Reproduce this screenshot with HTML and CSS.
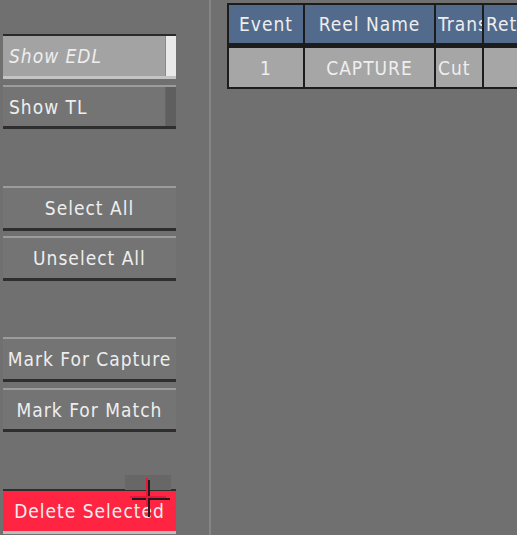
FILE: index.html
```html
<!DOCTYPE html>
<html>
<head>
<meta charset="utf-8">
<link rel="stylesheet" href="styles.css">
</head>
<body>
<div class="app">
  <div class="side">
    <div class="btn toggle on b-edl"><span class="lbl italic">Show EDL</span><span class="ind"></span></div>
    <div class="btn toggle b-tl"><span class="lbl">Show TL</span><span class="ind"></span></div>
    <div class="btn b-sel">Select All</div>
    <div class="btn b-unsel">Unselect All</div>
    <div class="btn b-cap">Mark For Capture</div>
    <div class="btn b-match">Mark For Match</div>
    <div class="btn red b-del">Delete Selected</div>
  </div>
  <div class="divider"></div>
  <div class="main">
    <table class="edl">
      <thead>
        <tr><th class="c-ev">Event</th><th class="c-reel">Reel Name</th><th class="c-tr left"><span class="clip">Trans</span></th><th class="c-ret left">Ret</th></tr>
      </thead>
      <tbody>
        <tr><td>1</td><td>CAPTURE</td><td class="left">Cut</td><td></td></tr>
      </tbody>
    </table>
  </div>
</div>
<svg class="cursor" width="50" height="50" viewBox="0 0 50 50">
  <rect x="0" y="1" width="46" height="15" fill="#676767"/>
  <rect x="23" y="6" width="2" height="37" fill="#1e1e1e"/>
  <rect x="7" y="24" width="38" height="2" fill="#1e1e1e"/>
  <rect x="21" y="4" width="2" height="28" fill="#e8163a"/>
  <rect x="5" y="22" width="36" height="2" fill="#e8163a"/>
</svg>
</body>
</html>
```

FILE: styles.css
```css
html, body {
  margin: 0;
  padding: 0;
  background: #707070;
  overflow: hidden;
  width: 517px;
  height: 535px;
}
body {
  font-family: "DejaVu Sans Condensed", "DejaVu Sans", sans-serif;
  font-size: 19px;
  color: #eeeeee;
  letter-spacing: 1px;
  position: relative;
}
.app {
  display: flex;
  height: 535px;
}
.side {
  width: 209px;
  flex: none;
  display: flex;
  flex-direction: column;
  padding-left: 3px;
  box-sizing: border-box;
}
.divider {
  width: 2px;
  flex: none;
  background: #858585;
}
.main {
  flex: 1;
  padding: 3px 0 0 16px;
  overflow: hidden;
}
.btn {
  width: 173px;
  height: 45px;
  box-sizing: border-box;
  background: #747474;
  border-top: 2px solid #9c9c9c;
  border-bottom: 3px solid #2e2e2e;
  display: flex;
  align-items: center;
  justify-content: center;
  white-space: nowrap;
}
.toggle {
  justify-content: space-between;
  align-items: stretch;
}
.toggle .lbl {
  display: flex;
  align-items: center;
  padding-left: 6px;
}
.italic { font-style: italic; }
.ind {
  width: 10px;
  flex: none;
  background: #5f5f5f;
  border-left: 1px solid #666;
}
.toggle.on {
  background: #a3a3a3;
  border-top: 2px solid #2a2a2a;
  border-bottom: 3px solid #c4c4c4;
}
.toggle.on .ind {
  background: #e9e9e9;
  border-left: 1px solid #8a8a8a;
}
.b-edl { margin-top: 34px; }
.b-tl { margin-top: 6px; height: 44px; }
.b-sel { margin-top: 57px; }
.b-unsel { margin-top: 5px; }
.b-cap { margin-top: 56px; }
.b-match { margin-top: 6px; height: 44px; }
.b-del { margin-top: 57px; }
.red {
  background: #ff2442;
  border-top: 2px solid #2e2e2e;
  border-bottom: 3px solid #bdbdbd;
}
.edl {
  border-collapse: collapse;
  table-layout: fixed;
  width: 340px;
  border: 2px solid #1c1c1c;
}
.edl th, .edl td {
  border: 2px solid #1c1c1c;
  padding: 0;
  text-align: center;
  white-space: nowrap;
  overflow: hidden;
  font-weight: normal;
}
.edl th {
  background: #526b8c;
  height: 38px;
  border-bottom: 5px solid #1c1c1c;
}
.edl td {
  background: #a6a6a6;
  height: 39px;
}
.edl .left { text-align: left; padding-left: 2px; }
.clip {
  display: block;
  width: 44px;
  overflow: hidden;
}
.c-ev { width: 74px; }
.c-reel { width: 129px; }
.c-tr { width: 44px; }
.c-ret { width: 80px; }
.cursor {
  position: absolute;
  left: 125px;
  top: 474px;
}
```
